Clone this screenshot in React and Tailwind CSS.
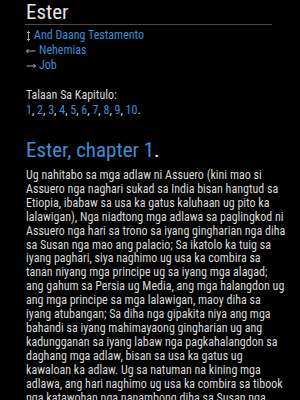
import React from 'react'

const lines = [
    'Ug nahitabo sa mga adlaw ni Assuero (kini mao si',
    'Assuero nga naghari sukad sa India bisan hangtud sa',
    'Etiopia, ibabaw sa usa ka gatus kaluhaan ug pito ka',
    'lalawigan), Nga niadtong mga adlawa sa paglingkod ni',
    'Assuero nga hari sa trono sa iyang gingharian nga diha',
    'sa Susan nga mao ang palacio; Sa ikatolo ka tuig sa',
    'iyang paghari, siya naghimo ug usa ka combira sa',
    'tanan niyang mga principe ug sa iyang mga alagad;',
    'ang gahum sa Persia ug Media, ang mga halangdon ug',
    'ang mga principe sa mga lalawigan, maoy diha sa',
    'iyang atubangan; Sa diha nga gipakita niya ang mga',
    'bahandi sa iyang mahimayaong gingharian ug ang',
    'kadungganan sa iyang labaw nga pagkahalangdon sa',
    'daghang mga adlaw, bisan sa usa ka gatus ug',
    'kawaloan ka adlaw. Ug sa natuman na kining mga',
    'adlawa, ang hari naghimo ug usa ka combira sa tibook',
    'nga katawohan nga nanambong diha sa Susan nga',
    'palacio, sa dagku ug sa gagmay, pito ka adlaw,',
]

const chapters = [1, 2, 3, 4, 5, 6, 7, 8, 9, 10]

const UpDown = () => (
    <svg width="5" height="10" viewBox="0 0 5 10" className="mr-[3px]">
        <path d="M2.5 0.5 V9.5 M0.8 2.2 L2.5 0.5 L4.2 2.2 M0.8 7.8 L2.5 9.5 L4.2 7.8" stroke="#bdbdbd" strokeWidth="0.9" fill="none" />
    </svg>
)

const Arrow = ({ dir }) => (
    <svg width="10" height="6" viewBox="0 0 10 6" className="mr-[3px]">
        {dir === 'left'
            ? <path d="M0.5 3 H9.5 M2.5 1 L0.5 3 L2.5 5" stroke="#bdbdbd" strokeWidth="0.9" fill="none" />
            : <path d="M0.5 3 H9.5 M7.5 1 L9.5 3 L7.5 5" stroke="#bdbdbd" strokeWidth="0.9" fill="none" />}
    </svg>
)

export default function App() {
    return (
        <div className="min-h-[400px] bg-black text-[#dadada] overflow-hidden font-stretch-[78%]" style={{ fontFamily: 'Roboto, "Noto Sans", sans-serif' }}>
            <div className="pl-[26px] pr-[28px]">
                {/* title */}
                <h1 className="text-[21px] leading-[24px] text-[#e6e6e6]">Ester</h1>
                <div className="h-px bg-[#4a4a4a] -ml-[1px] mb-[3px]"></div>

                {/* nav links */}
                <div className="text-[12px] leading-[15px]">
                    <div className="flex items-center">
                        <UpDown />
                        <span className="text-[#3b8fd6]">And Daang Testamento</span>
                    </div>
                    <div className="flex items-center">
                        <Arrow dir="left" />
                        <span className="text-[#3b8fd6]">Nehemias</span>
                    </div>
                    <div className="flex items-center">
                        <Arrow dir="right" />
                        <span className="text-[#3b8fd6]">Job</span>
                    </div>
                </div>

                {/* chapter list */}
                <div className="text-[12px] leading-[15px] mt-[15px]">
                    <div>Talaan Sa Kapitulo:</div>
                    <div>
                        {chapters.map((n, i) => (
                            <span key={n}>
                                <span className="text-[#3b8fd6]">{n}</span>
                                {i < chapters.length - 1 ? ', ' : '.'}
                            </span>
                        ))}
                    </div>
                </div>

                {/* chapter heading */}
                <h2 className="text-[21px] leading-[26px] mt-[19px] whitespace-nowrap">
                    <span className="text-[#3b8fd6]">Ester, chapter 1</span>
                    <span className="text-[#e6e6e6]">.</span>
                </h2>

                <p className="text-[12px] leading-[13.9px] mt-[6px] whitespace-nowrap">
                    {lines.map((l, i) => (
                        <React.Fragment key={i}>
                            {l}
                            <br />
                        </React.Fragment>
                    ))}
                </p>
            </div>
        </div>
    )
}
